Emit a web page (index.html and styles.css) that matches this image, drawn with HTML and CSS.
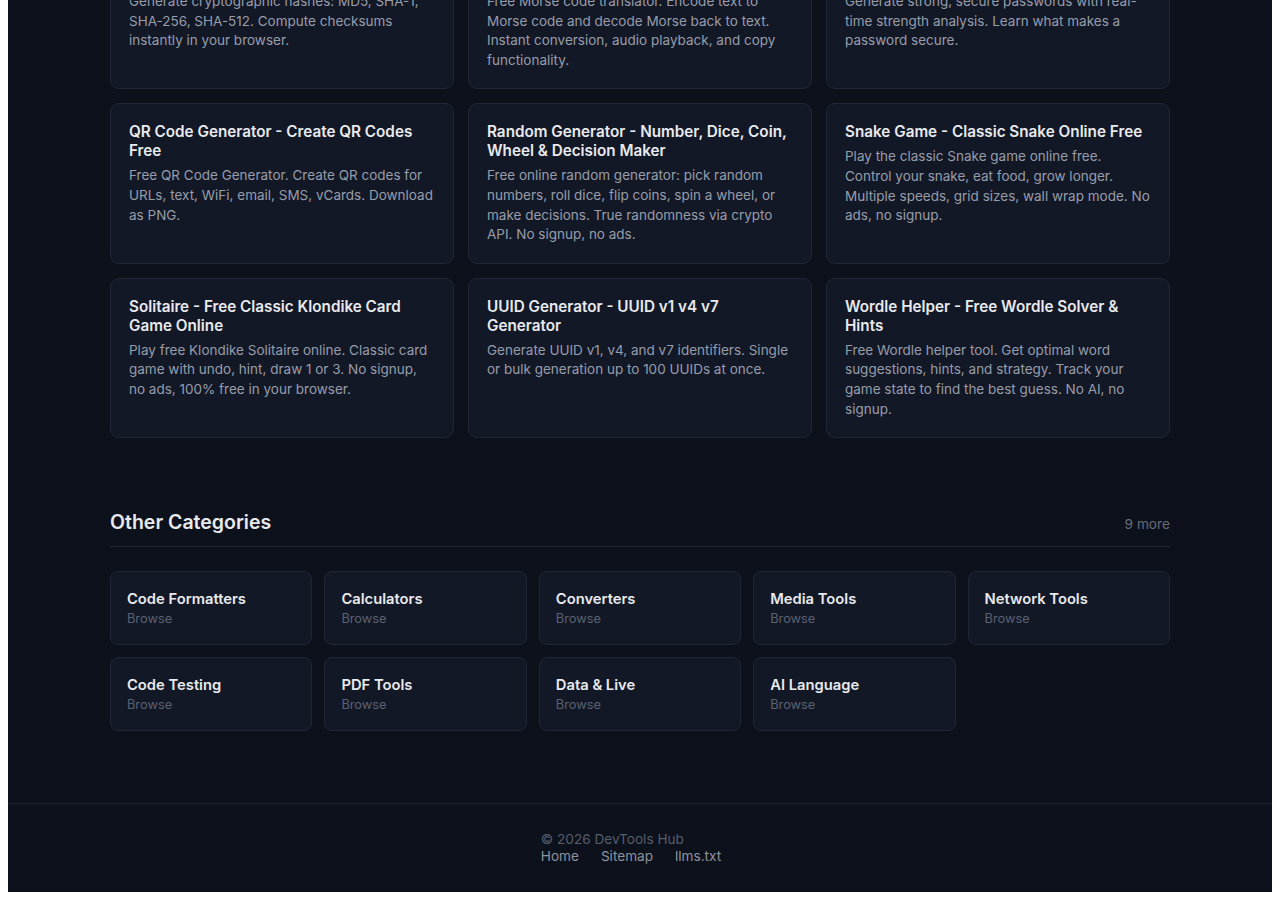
FILE: index.html
```html
<!DOCTYPE html>
<html lang="en">
  <head>
    <meta charset="UTF-8" />
    <meta name="viewport" content="width=device-width, initial-scale=1.0" />
    <title>DevTools Hub</title>
    <link rel="stylesheet" href="styles.css">
  </head>
  <body>
    <div class="page">
      <main class="container">
        <section class="tools">
          <div class="tool-grid">
            <a class="tool-card" href="#">
              <h3>Hash Generator - MD5, SHA-1, SHA-256, SHA-512 Online</h3>
              <p>Generate cryptographic hashes: MD5, SHA-1, SHA-256, SHA-512. Compute checksums instantly in your browser.</p>
            </a>
            <a class="tool-card" href="#">
              <h3>Morse Code Translator - Text to Morse Code &amp; Back</h3>
              <p>Free Morse code translator. Encode text to Morse code and decode Morse back to text. Instant conversion, audio playback, and copy functionality.</p>
            </a>
            <a class="tool-card" href="#">
              <h3>Password Generator - Create Strong Secure Passwords</h3>
              <p>Generate strong, secure passwords with real-time strength analysis. Learn what makes a password secure.</p>
            </a>
            <a class="tool-card" href="#">
              <h3>QR Code Generator - Create QR Codes Free</h3>
              <p>Free QR Code Generator. Create QR codes for URLs, text, WiFi, email, SMS, vCards. Download as PNG.</p>
            </a>
            <a class="tool-card" href="#">
              <h3>Random Generator - Number, Dice, Coin, Wheel &amp; Decision Maker</h3>
              <p>Free online random generator: pick random numbers, roll dice, flip coins, spin a wheel, or make decisions. True randomness via crypto API. No signup, no ads.</p>
            </a>
            <a class="tool-card" href="#">
              <h3>Snake Game - Classic Snake Online Free</h3>
              <p>Play the classic Snake game online free. Control your snake, eat food, grow longer. Multiple speeds, grid sizes, wall wrap mode. No ads, no signup.</p>
            </a>
            <a class="tool-card" href="#">
              <h3>Solitaire - Free Classic Klondike Card Game Online</h3>
              <p>Play free Klondike Solitaire online. Classic card game with undo, hint, draw 1 or 3. No signup, no ads, 100% free in your browser.</p>
            </a>
            <a class="tool-card" href="#">
              <h3>UUID Generator - UUID v1 v4 v7 Generator</h3>
              <p>Generate UUID v1, v4, and v7 identifiers. Single or bulk generation up to 100 UUIDs at once.</p>
            </a>
            <a class="tool-card" href="#">
              <h3>Wordle Helper - Free Wordle Solver &amp; Hints</h3>
              <p>Free Wordle helper tool. Get optimal word suggestions, hints, and strategy. Track your game state to find the best guess. No AI, no signup.</p>
            </a>
          </div>
        </section>

        <section class="other">
          <div class="section-head">
            <h2>Other Categories</h2>
            <span class="count">9 more</span>
          </div>
          <div class="category-grid">
            <a class="category-card" href="#"><span class="name">Code Formatters</span><span class="browse">Browse</span></a>
            <a class="category-card" href="#"><span class="name">Calculators</span><span class="browse">Browse</span></a>
            <a class="category-card" href="#"><span class="name">Converters</span><span class="browse">Browse</span></a>
            <a class="category-card" href="#"><span class="name">Media Tools</span><span class="browse">Browse</span></a>
            <a class="category-card" href="#"><span class="name">Network Tools</span><span class="browse">Browse</span></a>
            <a class="category-card" href="#"><span class="name">Code Testing</span><span class="browse">Browse</span></a>
            <a class="category-card" href="#"><span class="name">PDF Tools</span><span class="browse">Browse</span></a>
            <a class="category-card" href="#"><span class="name">Data &amp; Live</span><span class="browse">Browse</span></a>
            <a class="category-card" href="#"><span class="name">AI Language</span><span class="browse">Browse</span></a>
          </div>
        </section>
      </main>

      <footer class="site-footer">
        <div class="footer-inner">
          <div class="copyright">&copy; 2026 DevTools Hub</div>
          <nav class="footer-links">
            <a href="#">Home</a>
            <a href="#">Sitemap</a>
            <a href="#">llms.txt</a>
          </nav>
        </div>
      </footer>
    </div>
  </body>
</html>
```

FILE: styles.css
```css
body {
  font-family: Inter, "Noto Sans", Arial, sans-serif;
  margin: 0 8px 8px;
  background-color: #fff;
}

/* page is shown scrolled down a little */
.page {
  margin-top: -71px;
  background-color: #0d111b;
  color: #e8eaee;
}

.container {
  max-width: 1060px;
  margin: 0 auto;
  padding: 0 0 72px;
}

.tool-grid {
  display: grid;
  grid-template-columns: repeat(3, 1fr);
  gap: 14px;
}

.tool-card {
  display: block;
  background-color: #131826;
  border: 1px solid #202637;
  border-radius: 9px;
  padding: 18px;
  text-decoration: none;
}

.tool-card h3 {
  margin: 0 0 6px;
  font-size: 15.25px;
  line-height: 19px;
  font-weight: 600;
  color: #e8eaee;
}

.tool-card p {
  margin: 0;
  font-size: 13.5px;
  line-height: 19.6px;
  color: #979dab;
}

.other {
  margin-top: 70px;
}

.section-head {
  display: flex;
  justify-content: space-between;
  align-items: baseline;
  padding-bottom: 10px;
  border-bottom: 1px solid #1f2535;
}

.section-head h2 {
  margin: 0;
  font-size: 19.5px;
  line-height: 28px;
  font-weight: 600;
  color: #e8eaee;
}

.count {
  font-size: 13.7px;
  color: #656c7b;
}

.category-grid {
  display: grid;
  grid-template-columns: repeat(5, 1fr);
  gap: 12px;
  margin-top: 24px;
}

.category-card {
  display: flex;
  flex-direction: column;
  background-color: #131826;
  border: 1px solid #202637;
  border-radius: 8px;
  padding: 17px 16px 15px;
  text-decoration: none;
}

.category-card .name {
  font-size: 14.75px;
  line-height: 20px;
  font-weight: 600;
  color: #e8eaee;
}

.category-card .browse {
  font-size: 12.8px;
  line-height: 20px;
  color: #5a6172;
}

.site-footer {
  border-top: 1px solid #1d2231;
  padding: 27px 0 27px;
  text-align: center;
}

.footer-inner {
  display: inline-block;
  text-align: left;
}

.copyright {
  font-size: 13.6px;
  line-height: 17px;
  color: #565d6d;
}

.footer-links {
  display: flex;
  gap: 22px;
  padding-right: 18px;
}

.footer-links a {
  font-size: 13.6px;
  line-height: 16px;
  color: #8d939f;
  text-decoration: none;
}
```
